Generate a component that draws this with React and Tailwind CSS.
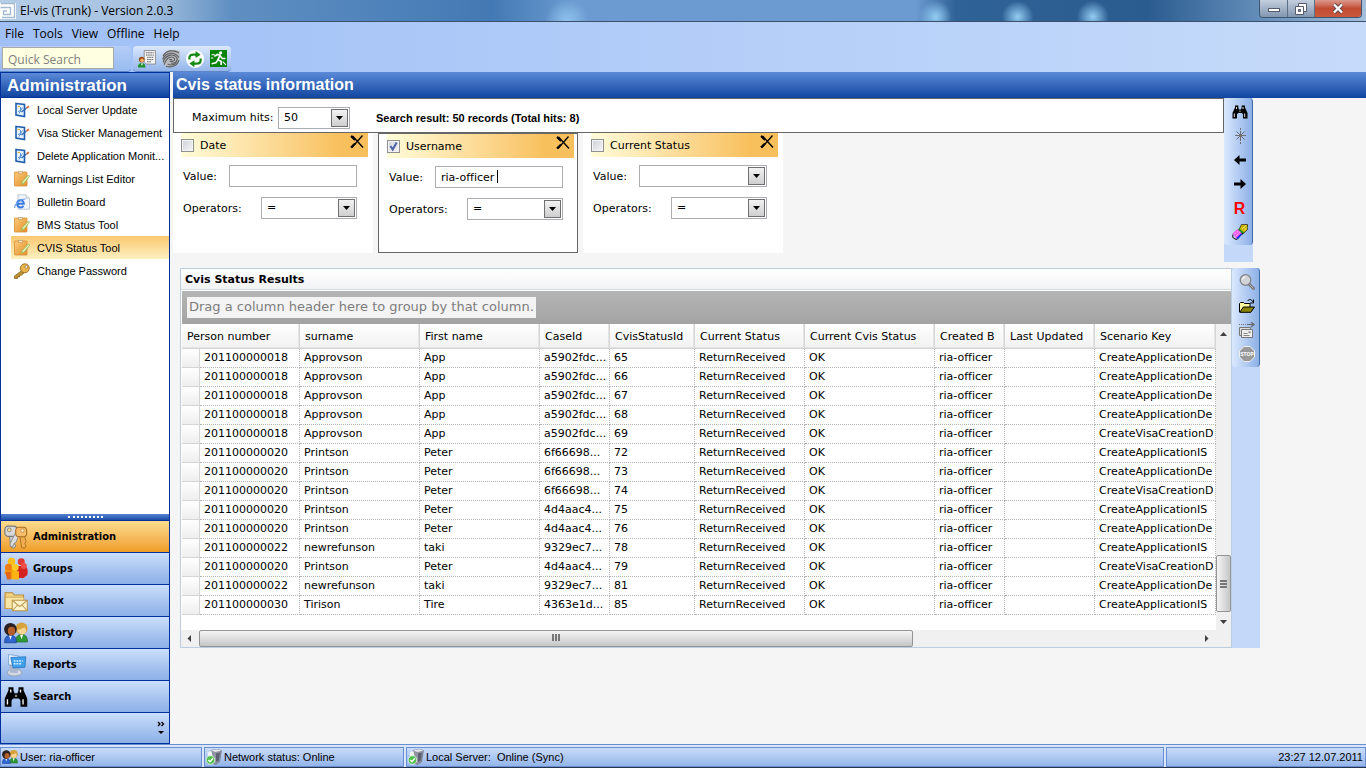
import React from 'react';

const VERDANA = "font-['DejaVu_Sans',Verdana,sans-serif]";
const ARIAL = "font-['Liberation_Sans',Arial,sans-serif]";
const SEGOE = "font-['Open_Sans','Segoe_UI',sans-serif]";

/* ---------- icons ---------- */

function Svg({ size = 16, children, label }) {
  return (
    <svg width={size} height={size} viewBox="0 0 16 16" className="block shrink-0" aria-hidden={!label} aria-label={label}>
      {children}
    </svg>
  );
}

function LogoIcon() {
  return (
    <Svg size={16}>
      <rect width="16" height="16" fill="#fff" />
      <path d="M1 .5h13.500v14H2M.5 4.500h10v7H3.500V8H7" fill="none" stroke="#a3b9d0" strokeWidth="1.300" />
    </Svg>
  );
}

function ReportUserIcon() {
  return (
    <Svg size={18}>
      <path d="M5.500.5h10v12h-8l-2-2z" fill="#f4f4f4" stroke="#8a8a8a" strokeWidth=".8" />
      <path d="M7 2.500h7M7 4.500h7M8 6.500h6M8 8.500h6M8 10.500h4" stroke="#555" strokeWidth=".8" strokeDasharray="1.500 .5" />
      <circle cx="3.300" cy="8.500" r="2.500" fill="#9a4a10" />
      <circle cx="3.600" cy="9.200" r="1.600" fill="#f6b060" />
      <path d="M0 15.500c0-3 1.500-4 3.300-4s3.300 1 3.300 4z" fill="#1f8f2c" />
      <path d="M2.500 12l1 2 1-2z" fill="#fff" />
    </Svg>
  );
}

function FingerprintIcon() {
  return (
    <Svg size={18}>
      <path d="M1 4C4-.5 11-.5 16 .8c-.5 3 .2 6-.5 8.200C14 13 9 16 5 15.500 1 14-.5 8 1 4z" fill="#b9bcc0" />
      <g fill="none" stroke="#5f5f5f" strokeWidth="1">
        <path d="M.8 5.500C4-.5 11 0 15 2.500" />
        <path d="M.6 8.500C3 2 11 1 15 6.500" />
        <path d="M1 11C3 4 10 3 13 6.500c2 3-2 6-5 5" />
        <path d="M2 13C4 6 9 5 11 7.500c1 2-2 3-4 2.500" />
        <path d="M3.500 14.500C8 16 14 14 15 9" />
        <path d="M5 12.500c3 1.500 6 .5 8-1.500" />
        <path d="M6.500 8.500h2.500" />
      </g>
    </Svg>
  );
}

function RefreshIcon() {
  return (
    <Svg size={18}>
      <circle cx="8" cy="8" r="8" fill="#fff" />
      <path d="M3 8.500V7q0-3 3.500-3H9" fill="none" stroke="#148a14" strokeWidth="2" />
      <path d="M8.500.8L13 4.200 8.500 7z" fill="#148a14" />
      <path d="M13 7.500V9q0 3-3.500 3H7" fill="none" stroke="#148a14" strokeWidth="2" />
      <path d="M7.500 9L3 12l4.500 3.300z" fill="#148a14" />
    </Svg>
  );
}

function ExitIcon() {
  return (
    <Svg size={17}>
      <rect width="16" height="16" fill="#0a840a" />
      <circle cx="10" cy="2.700" r="1.500" fill="#fff" />
      <path d="M4 6l3-1.800L9.500 5 7.500 9l3 1.800V14M7.500 9.500L5.500 12 1.500 13M9.500 5.500l2 2.500h3" fill="none" stroke="#fff" strokeWidth="1.500" />
      <path d="M1.500 4.500h3M1 7.500h2M12 11l3 3" stroke="#fff" strokeWidth="1" />
    </Svg>
  );
}

function FormIcon() {
  return (
    <Svg size={16}>
      <path d="M2 1.500l8.500 1v12l-8.500-1.500z" fill="#e9f3ff" stroke="#1f5fae" strokeWidth="1.600" />
      <path d="M4 9.500l3-1M5 11.500l3.500-6M6.500 5v5" fill="none" stroke="#5b93d0" strokeWidth="1" />
      <path d="M3.500 4.500h2.500" stroke="#e0b440" strokeWidth="1.200" />
      <path d="M7.500 10l5-4" stroke="#2c68b8" strokeWidth="1.500" />
      <path d="M12.500 6l2.500-1.700" stroke="#e06a3c" strokeWidth="1.800" />
    </Svg>
  );
}

function ClipboardIcon() {
  return (
    <Svg size={16}>
      <defs>
        <linearGradient id="clip" x1="0" y1="0" x2="1" y2="1">
          <stop offset="0" stopColor="#fbc978" />
          <stop offset="1" stopColor="#e3912a" />
        </linearGradient>
      </defs>
      <rect x=".5" y="1" width="12.500" height="14" rx=".5" fill="url(#clip)" stroke="#d89038" strokeWidth=".8" />
      <path d="M4.500.5h4v1.800h-4z" fill="#f5efe0" stroke="#a98450" strokeWidth=".5" />
      <path d="M7.500 13.500l1-3.300 6-6.200 1.200 1.200-5.500 6.600z" fill="#e8f5c0" stroke="#8ab850" strokeWidth=".8" />
    </Svg>
  );
}

function BulletinIcon() {
  return (
    <Svg size={16}>
      <path d="M4 .8h8l3.500 3.500v10.900H4z" fill="#f2f5fb" stroke="#b3bccb" strokeWidth=".8" />
      <path d="M12 .8v3.500h3.500" fill="#dde4ef" stroke="#b3bccb" strokeWidth=".6" />
      <path d="M3.500 9.800h6.300c0-4.800-6.500-4.600-6.600 0-.1 4.200 4.800 4.600 6.300 1.900" fill="none" stroke="#3b7be0" strokeWidth="2" />
      <path d="M1 14C-.5 11 7 4.500 11.500 5" fill="none" stroke="#5f9bf0" strokeWidth="1.100" />
    </Svg>
  );
}

function KeyIcon() {
  return (
    <Svg size={16}>
      <path d="M8 7.500L.5 13v2.500h3V14h2v-1.700h1.800l3-2.500z" fill="#c08f2e" stroke="#7c5b17" strokeWidth=".7" />
      <circle cx="10.800" cy="5.300" r="4.500" fill="#e9b44c" stroke="#8b6518" strokeWidth=".8" />
      <circle cx="12.300" cy="3.900" r="1.300" fill="#fff" stroke="#7c5b17" strokeWidth=".6" />
    </Svg>
  );
}

function KeysIcon() {
  return (
    <Svg size={24}>
      <path d="M3.500 7l1 7.500 2 1 1.500-1.500-1-1.500 1-1.500-.8-4z" fill="#c9c9c9" stroke="#777" strokeWidth=".5" />
      <rect x=".6" y=".8" width="8" height="6.800" rx="2.200" fill="#d9d9d9" stroke="#7a7a7a" strokeWidth=".8" />
      <circle cx="3.500" cy="3.300" r="1.300" fill="#f8d68a" stroke="#777" strokeWidth=".5" />
      <path d="M10.500 7l1.200 8 2 .5 1-1.700-.9-1.300 1-1.500-1.500-4.500z" fill="#f2ae4e" stroke="#a56d20" strokeWidth=".6" />
      <path d="M7.500 5.500l-3.500 7 .3 2 1.800-.4.600-1.800 1.200-.5 1.600-4z" fill="#dcdcdc" stroke="#7d7d7d" strokeWidth=".5" />
      <rect x="7.800" y="1.500" width="7.300" height="6.300" rx="2.200" fill="#f7bd69" stroke="#a56d20" strokeWidth=".7" />
      <circle cx="12.300" cy="3.700" r="1.100" fill="#fff3d5" stroke="#a56d20" strokeWidth=".4" />
    </Svg>
  );
}

function GroupsIcon() {
  return (
    <Svg size={24}>
      <circle cx="11.500" cy="3.200" r="2.300" fill="#e03a34" />
      <path d="M8.500 6h5.500c2 1 2 4 1.500 6l-2.500 2H9z" fill="#d5211f" />
      <circle cx="13.200" cy="6" r="2" fill="#ee5048" />
      <circle cx="5" cy="3" r="2.500" fill="#fbbd17" />
      <path d="M1 6h7.500v8.500H3L.5 11z" fill="#f59a0c" />
      <circle cx="3" cy="6.800" r="2.300" fill="#ee7d12" />
      <circle cx="7.500" cy="7" r="2.300" fill="#ffc928" />
      <path d="M5.500 9.500h4.500v5.500H5.500z" fill="#fbb414" />
      <path d="M1 10h3.500v5H2z" fill="#e2641a" />
    </Svg>
  );
}

function InboxIcon() {
  return (
    <Svg size={24}>
      <path d="M.7 2.500h5l1 1.500h6.300v9H.7z" fill="#f2d384" stroke="#b78d37" strokeWidth=".7" />
      <path d="M.9 5.500h12.300V13H.9z" fill="#fae6a4" stroke="#c59c48" strokeWidth=".5" />
      <path d="M5.500 7.500h10v7h-10z" fill="#fff4cb" stroke="#b9954a" strokeWidth=".7" />
      <path d="M5.500 7.500l5 4.200 5-4.200M5.500 14.500l3.700-4M15.500 14.500l-3.700-4" fill="none" stroke="#b9954a" strokeWidth=".7" />
    </Svg>
  );
}

function UsersIcon({ size = 24 }) {
  return (
    <Svg size={size}>
      <path d="M8 14c0-4 1.500-5 3.700-5s3.900 1 3.900 5z" fill="#2f9a35" stroke="#1d6a22" strokeWidth=".5" />
      <path d="M10.700 9.200l1 3 1-3z" fill="#fff" />
      <circle cx="11.700" cy="5" r="4" fill="#d8a23a" />
      <path d="M8.800 5.500c2 .5 3.500-.5 4.700-1.500l1.300 2c0 4-5.600 4-6-.5z" fill="#f7d494" />
      <path d="M.4 14.500c0-4 1.500-5 3.900-5s3.900 1 3.900 5z" fill="#2f66d0" stroke="#1b3f90" strokeWidth=".5" />
      <path d="M3.300 9.500l1 3 1-3z" fill="#fff" />
      <circle cx="4.300" cy="5.500" r="4.200" fill="#2a2020" />
      <ellipse cx="5" cy="6.700" rx="2.500" ry="2.800" fill="#b5602a" />
    </Svg>
  );
}

function ReportsIcon() {
  return (
    <Svg size={24}>
      <ellipse cx="7" cy="13" rx="4.800" ry="2.300" fill="#d5d9e4" stroke="#8e95a8" strokeWidth=".5" />
      <path d="M3 3.500l1 9.500 5 .5.500-4z" fill="#aab6cf" />
      <path d="M3 1l7 1v6H3z" fill="#e8f2fc" stroke="#6e9cd0" strokeWidth=".5" />
      <path d="M4.500 3l10-.5-.5 7-8 .5z" fill="#3fa0ec" stroke="#2472b8" strokeWidth=".5" />
      <path d="M6.500 5.300h6M6.500 7.200h5.500" stroke="#d9efff" strokeWidth="1" strokeDasharray="1.200 .6" />
    </Svg>
  );
}

function BinocularsIcon({ size = 16 }) {
  return (
    <Svg size={size}>
      <path d="M3 1.500h3.300v2l.7 2h2l.7-2v-2H13v2l2.500 5.500v5.500H11v-4l-1-1.500H6l-1 1.500v4H.5V9L3 3.500z" fill="#000" />
      <path d="M4.500 3v2M2.300 9.500V13M11 3v2M12.700 9.500V13" stroke="#fff" strokeWidth=".9" />
      <path d="M7.300 6.500h1.400v1.500H7.300z" fill="#8a8a8a" />
    </Svg>
  );
}

function SparkIcon() {
  return (
    <Svg>
      <g stroke="#707070" strokeWidth="1">
        <path d="M8.500 0v2M8.500 3v10M8.500 14v2M3 7.500h11" />
        <path d="M4.500 3.500l8 8M12.500 3.500l-8 8" />
      </g>
    </Svg>
  );
}

function ArrowIcon({ right }) {
  return (
    <Svg>
      <path d={right ? 'M8.500 3L14 8l-5.500 5V9.500H2v-3h6.500z' : 'M7.500 3L2 8l5.500 5V9.500H14v-3H7.500z'} fill="#000" />
    </Svg>
  );
}

function EraserIcon() {
  return (
    <Svg>
      <path d="M9.500.5h6v5l-5 5-4-4z" fill="#c7b400" stroke="#222" strokeWidth=".7" />
      <path d="M10 5l4-3.500M12 6.500l3-3" stroke="#fff27a" strokeWidth=".8" />
      <path d="M7 4.500l5 4-1.500 2-5-4z" fill="#118c22" />
      <path d="M.5 9.500L5.500 5l4.500 4.500-5.500 5.500z" fill="#f05ae8" />
      <path d="M2 10.500l4.500-4M4 12l4.500-4.500" stroke="#fff" strokeWidth=".7" strokeDasharray="1 1" />
      <path d="M.8 10.500v3L4 15.500l1.500-.5 5.300-6" fill="none" stroke="#111" strokeWidth="1" />
      <path d="M5 14.500l4.500-4.500" stroke="#0a2cff" strokeWidth="1.600" />
    </Svg>
  );
}

function MagnifierIcon() {
  return (
    <Svg>
      <path d="M10 10l4.500 4.500" stroke="#777" strokeWidth="3" strokeLinecap="round" />
      <path d="M10.500 10.500l4 4" stroke="#b9b9b9" strokeWidth="1" />
      <circle cx="6.500" cy="6" r="5.300" fill="#d0d4d8" stroke="#828282" strokeWidth="1.200" />
      <path d="M3.500 5.500a3 3 0 0 1 3-2.500" fill="none" stroke="#fff" strokeWidth="1" />
    </Svg>
  );
}

function OpenFolderIcon() {
  return (
    <Svg>
      <path d="M.5 14V5.500l1-1h3l1 1h5.500V9" fill="#fff9a0" stroke="#000" strokeWidth="1" />
      <path d="M.8 14.300L4.300 9h11.200l-3.700 5.300z" fill="#8a8400" stroke="#000" strokeWidth="1" />
      <path d="M8.500 3c1.500-2 4-2 5.300.8M14.500 1.500V5h-3.300" fill="none" stroke="#000" strokeWidth="1" />
    </Svg>
  );
}

function SendFormsIcon() {
  return (
    <Svg>
      <path d="M0 2.500h8" stroke="#777" strokeWidth="1" strokeDasharray="1 1" />
      <path d="M8 2.500h7M12 0l3 2.500-3 2.500" fill="none" stroke="#666" strokeWidth="1.200" />
      <path d="M.5 5.500h11v8H.5z" fill="#ddd" stroke="#777" />
      <path d="M2.500 7.500h11v8h-11z" fill="#eee" stroke="#777" />
      <path d="M4.500 11.500h4M4.500 13.500h6" stroke="#888" />
      <path d="M9.500 9.500h2v1.500h-2z" fill="#777" />
    </Svg>
  );
}

function StopIcon() {
  return (
    <Svg>
      <path d="M5 .5h6L15.500 5v6L11 15.500H5L.5 11V5z" fill="#999" stroke="#eee" strokeWidth="1" />
      <text x="8" y="10" textAnchor="middle" fontSize="5" fontWeight="bold" fill="#fff" fontFamily="Liberation Sans">STOP</text>
    </Svg>
  );
}

function ServerIcon() {
  return (
    <Svg size={16}>
      <path d="M5 1.500L11.500.3l4 1.200-2 11.500-4 2.500-4-2z" fill="#8f93a2" stroke="#6a6c78" strokeWidth=".6" />
      <path d="M5 1.500L11.500.3l4 1.200-6 1.500z" fill="#e5e7ee" />
      <path d="M10 4.500l4-1-1.200 8-2.800 1.500z" fill="#5c6072" />
      <path d="M1.500 3.500l4-1.500 1.500 8-4 1z" fill="#f0f2f7" />
      <circle cx="4.500" cy="11" r="4.300" fill="#4fc04a" stroke="#e9f7e6" strokeWidth=".8" />
      <path d="M2.300 11l1.700 1.800L7 9.300" fill="none" stroke="#fff" strokeWidth="1.400" />
    </Svg>
  );
}

function CloseX() {
  return (
    <svg width="14" height="14" viewBox="0 0 14 14" className="block" aria-hidden="true">
      <path d="M1 1.500h2L13 12.500M12.500.5L2 12.500" fill="none" stroke="#000" strokeWidth="1.300" />
      <path d="M1 12.500l4-4M1 1l4 4" stroke="#000" strokeWidth="2" />
    </svg>
  );
}

/* ---------- data ---------- */

const TOOLS = [
  { label: 'Local Server Update', Icon: FormIcon },
  { label: 'Visa Sticker Management', Icon: FormIcon },
  { label: 'Delete Application Monit...', Icon: FormIcon },
  { label: 'Warnings List Editor', Icon: ClipboardIcon },
  { label: 'Bulletin Board', Icon: BulletinIcon },
  { label: 'BMS Status Tool', Icon: ClipboardIcon },
  { label: 'CVIS Status Tool', Icon: ClipboardIcon, active: true },
  { label: 'Change Password', Icon: KeyIcon },
];

const SECTIONS = [
  { label: 'Administration', Icon: KeysIcon, active: true },
  { label: 'Groups', Icon: GroupsIcon },
  { label: 'Inbox', Icon: InboxIcon },
  { label: 'History', Icon: UsersIcon },
  { label: 'Reports', Icon: ReportsIcon },
  { label: 'Search', Icon: BinocularsIcon },
];

const HEADERS = ['surname', 'First name', 'CaseId', 'CvisStatusId', 'Current Status', 'Current Cvis Status', 'Created B', 'Last Updated', 'Scenario Key'];

const ROWS = [
  ['201100000018', 'Approvson', 'App', 'a5902fdc', '65', 'CreateApplicationDe'],
  ['201100000018', 'Approvson', 'App', 'a5902fdc', '66', 'CreateApplicationDe'],
  ['201100000018', 'Approvson', 'App', 'a5902fdc', '67', 'CreateApplicationDe'],
  ['201100000018', 'Approvson', 'App', 'a5902fdc', '68', 'CreateApplicationDe'],
  ['201100000018', 'Approvson', 'App', 'a5902fdc', '69', 'CreateVisaCreationD'],
  ['201100000020', 'Printson', 'Peter', '6f66698', '72', 'CreateApplicationIS'],
  ['201100000020', 'Printson', 'Peter', '6f66698', '73', 'CreateApplicationDe'],
  ['201100000020', 'Printson', 'Peter', '6f66698', '74', 'CreateVisaCreationD'],
  ['201100000020', 'Printson', 'Peter', '4d4aac4', '75', 'CreateApplicationIS'],
  ['201100000020', 'Printson', 'Peter', '4d4aac4', '76', 'CreateApplicationDe'],
  ['201100000022', 'newrefunson', 'taki', '9329ec7', '78', 'CreateApplicationIS'],
  ['201100000020', 'Printson', 'Peter', '4d4aac4', '79', 'CreateVisaCreationD'],
  ['201100000022', 'newrefunson', 'taki', '9329ec7', '81', 'CreateApplicationDe'],
  ['201100000030', 'Tirison', 'Tire', '4363e1d', '85', 'CreateApplicationIS'],
].map(([person, surname, first, caseId, id, key]) => [
  person, surname, first, `${caseId}...`, id, 'ReturnReceived', 'OK', 'ria-officer', '', key,
]);

/* ---------- window chrome ---------- */

function TitleBar() {
  return (
    <header className="flex h-[22px] items-start justify-between border-b border-[#3c4f6b] bg-[radial-gradient(circle_at_41.5%_100%,#8fc3ee_0,transparent_22px),radial-gradient(circle_at_68.5%_80%,#93cdf3_0,transparent_16px),radial-gradient(circle_at_74.5%_80%,#93cdf3_0,transparent_16px),radial-gradient(circle_at_80%_80%,#93cdf3_0,transparent_16px),linear-gradient(90deg,#b4cce6_0%,#a5c1df_11%,#5f8fc2_17%,#4379b4_36%,#6b9bd0_42%,#6b9bd0_67%,#2f6296_70%,#2b5c90_84%,#5a86b3_91%,#a3bfdb_100%)]">
      <div className="flex h-[22px] items-center gap-1">
        <LogoIcon />
        <h1 className={`${SEGOE} text-[12px] leading-4 text-black`}>El-vis (Trunk) - Version 2.0.3</h1>
      </div>
      <div className="mr-1 flex h-[18px] overflow-hidden rounded-b-[4px] border border-t-0 border-[#3f5673]">
        <button aria-label="Minimize" className="flex w-[28px] items-end justify-center border-r border-[#5c708a] bg-gradient-to-b from-[#c3cfdd] to-[#8296b0] pb-[5px]">
          <span className="h-[4px] w-[12px] border border-[#555a6c] bg-white" />
        </button>
        <button aria-label="Restore" className="flex w-[27px] items-center justify-center border-r border-[#5c708a] bg-gradient-to-b from-[#c3cfdd] to-[#8296b0]">
          <svg width="12" height="12" viewBox="0 0 12 12" aria-hidden="true">
            <path d="M3.500.5h8v8h-8z" fill="#fff" stroke="#555a6c" />
            <path d="M.5 3.500h8v8h-8z" fill="#fff" stroke="#555a6c" />
            <path d="M3.500 6.500h2v2h-2z" fill="#8296b0" stroke="#555a6c" />
          </svg>
        </button>
        <button aria-label="Close" className="flex w-[46px] items-center justify-center bg-gradient-to-b from-[#d99a8d] via-[#c24a32] to-[#c75a3c]">
          <svg width="12" height="11" viewBox="0 0 12 11" aria-hidden="true">
            <path d="M2 1.500l8 8M10 1.500l-8 8" stroke="#5a4450" strokeWidth="4" />
            <path d="M2 1.500l8 8M10 1.500l-8 8" stroke="#fff" strokeWidth="2.400" />
          </svg>
        </button>
      </div>
    </header>
  );
}

function MenuBar() {
  return (
    <nav className={`${SEGOE} flex h-6 items-center gap-[9px] pl-[5px] text-[12px] leading-4 text-black`}>
      {['File', 'Tools', 'View', 'Offline', 'Help'].map((item) => (
        <button key={item}>{item}</button>
      ))}
    </nav>
  );
}

function ToolBar() {
  return (
    <div className="flex h-[26px] gap-[2px]">
      <div className="w-[131px] rounded-r border-b border-[#5f86c4] bg-gradient-to-b from-[#b5cdf7] to-[#98bbf0] pl-[2px] pt-px">
        <input
          aria-label="Quick Search"
          placeholder="Quick Search"
          className={`${SEGOE} block h-[22px] w-[112px] border border-[#a9a9a9] bg-[#ffffe1] px-[5px] pt-[3px] text-[12px] leading-4 outline-none placeholder:text-[#808080]`}
        />
      </div>
      <div className="flex w-[98px] items-center gap-[6px] rounded border-b border-[#5f86c4] bg-gradient-to-b from-[#dbe8fc] to-[#94b6ea] pl-[5px]">
        <button aria-label="Applicant report"><ReportUserIcon /></button>
        <button aria-label="Fingerprints"><FingerprintIcon /></button>
        <button aria-label="Refresh"><RefreshIcon /></button>
        <button aria-label="Exit"><ExitIcon /></button>
      </div>
    </div>
  );
}

/* ---------- side bar ---------- */

function SideBar() {
  return (
    <aside className="flex w-[170px] shrink-0 flex-col border border-[#00309c] bg-white">
      <h2 className={`${ARIAL} h-[25px] border-b border-[#00309c] bg-gradient-to-b from-[#5b8ad8] to-[#0f459f] pl-[6px] text-[17px] font-bold leading-[25px] text-white`}>
        Administration
      </h2>
      <ul className={`${ARIAL} flex-1 pl-[10px] text-[11px] text-black`}>
        {TOOLS.map(({ label, Icon, active }) => (
          <li key={label}>
            <a
              href="#"
              className={`flex h-[23px] items-center gap-[7px] whitespace-nowrap pl-[3px] ${active ? 'bg-gradient-to-b from-[#fac86e] to-[#fdf0c0]' : ''}`}
            >
              <Icon />
              {label}
            </a>
          </li>
        ))}
      </ul>
      <div className="flex h-[6px] items-center justify-center bg-gradient-to-b from-[#5684d2] to-[#1c4da5]">
        <span className="w-[35px] border-t-2 border-dotted border-white" />
      </div>
      <ul className="font-['DejaVu_Sans_Condensed',Tahoma,sans-serif] text-[11px] font-bold text-black">
        {SECTIONS.map(({ label, Icon, active }) => (
          <li key={label}>
            <button
              className={`flex h-8 w-full items-center gap-[5px] border-t border-[#00309c] bg-gradient-to-b pl-[3px] ${active ? 'from-[#fbdc8c] to-[#ef9d22]' : 'from-[#cbdefb] to-[#8cafe6]'}`}
            >
              <Icon size={24} />
              {label}
            </button>
          </li>
        ))}
      </ul>
      <button aria-label="Configure buttons" className="flex h-[31px] items-center justify-end border-t border-[#00309c] bg-gradient-to-b from-[#cbdefb] to-[#8cafe6] pr-1">
        <svg width="8" height="14" viewBox="0 0 8 14" aria-hidden="true">
          <path d="M1 1l2 2-2 2M4.500 1l2 2-2 2" fill="none" stroke="#000" strokeWidth="1.300" />
          <path d="M1 10h6l-3 3z" />
        </svg>
      </button>
    </aside>
  );
}

/* ---------- search form ---------- */

function DropDown({ id, className, options }) {
  return (
    <span className={`relative block h-[22px] ${className}`}>
      <select id={id} className="block h-full w-full appearance-none border border-[#abadb3] bg-white pl-[5px] pr-5 text-[11px] text-black outline-none">
        {options.map((o) => (
          <option key={o}>{o}</option>
        ))}
      </select>
      <span className="pointer-events-none absolute right-[2px] top-[2px] flex h-[18px] w-[17px] items-center justify-center border border-[#707070] bg-gradient-to-b from-[#f2f2f2] to-[#cfcfcf]">
        <svg width="7" height="4" viewBox="0 0 7 4" aria-hidden="true"><path d="M0 0h7L3.500 4z" /></svg>
      </span>
    </span>
  );
}

function Criterion({ name, id, value, checked, focused, dropDown }) {
  return (
    <fieldset className={`h-[120px] w-[200px] shrink-0 bg-white pl-2 ${focused ? 'border border-[#666] pr-[3px]' : 'pr-[5px]'}`}>
      <div className="flex h-6 items-center bg-gradient-to-r from-[#fffcd9] to-[#f8c05c] to-85%">
        <label className="flex flex-1 items-center gap-[6px]">
          <span className="relative block size-[13px]">
            <input type="checkbox" defaultChecked={checked} className="peer block size-[13px] appearance-none border border-[#8e8f8f] bg-gradient-to-br from-[#cdd1d8] to-[#f6f6f6] shadow-[inset_0_0_0_1px_#f4f4f4]" />
            <svg width="13" height="13" viewBox="0 0 13 13" className="pointer-events-none absolute left-0 top-0 hidden peer-checked:block" aria-hidden="true">
              <path d="M3.500 6l2.200 3.500 4-7" fill="none" stroke="#4b62a3" strokeWidth="2" />
            </svg>
          </span>
          <span className="pt-px">{name}</span>
        </label>
        <button aria-label={`Remove ${name}`} className="mb-[6px] mr-1"><CloseX /></button>
      </div>
      <div className="ml-[2px] mr-[11px] mt-2 flex flex-col gap-[10px]">
        <div className="flex items-center justify-between">
          <label htmlFor={`${id}-value`} className="pt-px">Value:</label>
          {dropDown ? (
            <DropDown id={`${id}-value`} className="w-32" options={['']} />
          ) : (
            <span className="relative block">
              <input id={`${id}-value`} defaultValue={value} className="block h-[22px] w-32 border border-[#abadb3] bg-white px-[5px] text-[11px] text-black outline-none" />
              {focused && <span className="absolute left-[62px] top-1 h-[13px] w-px bg-black" />}
            </span>
          )}
        </div>
        <div className="flex items-center justify-between">
          <label htmlFor={`${id}-op`} className="pt-px">Operators:</label>
          <DropDown id={`${id}-op`} className="w-24" options={['=']} />
        </div>
      </div>
    </fieldset>
  );
}

function SearchArea() {
  return (
    <section className="flex pr-[113px]">
      <div className="min-w-0 flex-1">
        <div className="flex h-[35px] items-center border border-[#666] bg-white pl-[18px] pt-1">
          <label htmlFor="max-hits" className="w-[86px] pt-px">Maximum hits:</label>
          <DropDown id="max-hits" className="w-[72px]" options={['50']} />
          <strong className={`${ARIAL} ml-[26px] text-[11px] font-bold`}>Search result: 50 records (Total hits: 8)</strong>
        </div>
        <div className="flex gap-[5px]">
          <Criterion name="Date" id="date" />
          <Criterion name="Username" id="username" value="ria-officer" checked focused />
          <Criterion name="Current Status" id="status" dropDown />
        </div>
      </div>
      <div className="w-[29px] shrink-0 self-start bg-[#c4d9f9] pb-[17px]">
        <div className="flex h-[147px] flex-col items-center gap-2 rounded border-r border-[#3f67a8] bg-gradient-to-r from-[#dbe9fd] to-[#8db0e6] pl-[3px] pt-[6px]">
          <button aria-label="Find"><BinocularsIcon /></button>
          <button aria-label="New"><SparkIcon /></button>
          <button aria-label="Back"><ArrowIcon /></button>
          <button aria-label="Forward"><ArrowIcon right /></button>
          <button className={`${ARIAL} h-4 text-[16px] font-bold leading-[18px] text-[#ff0000]`}>R</button>
          <button aria-label="Clear"><EraserIcon /></button>
        </div>
      </div>
    </section>
  );
}

/* ---------- results ---------- */

const headCell = 'h-[25px] overflow-hidden whitespace-nowrap border-b border-r border-[#d5d5d5] bg-gradient-to-b from-white to-[#f1f1f1] p-0 pl-[5px] pt-px text-left font-normal shadow-[inset_-1px_-1px_0_#e4e4e4]';

function ResultsTable() {
  return (
    <table className="w-full table-fixed border-separate border-spacing-0 bg-white text-[11px] text-black">
      <colgroup>
        <col className="w-[18px]" />
        <col className="w-[100px]" />
        <col className="w-[120px]" />
        <col className="w-[120px]" />
        <col className="w-[70px]" />
        <col className="w-[85px]" />
        <col className="w-[110px]" />
        <col className="w-[130px]" />
        <col className="w-[70px]" />
        <col className="w-[90px]" />
        <col />
      </colgroup>
      <thead>
        <tr>
          <th colSpan={2} className={headCell}>Person number</th>
          {HEADERS.map((h) => (
            <th key={h} className={headCell}>{h}</th>
          ))}
        </tr>
      </thead>
      <tbody>
        {ROWS.map((row, i) => (
          <tr key={i}>
            <td className="h-[19px] border-b border-r border-[#d5d5d5] bg-gradient-to-b from-white to-[#eee] p-0" />
            {row.map((cell, j) => (
              <td key={j} className="h-[19px] overflow-hidden whitespace-nowrap border-b border-r border-dotted border-[#b4b4b4] p-0 pl-1 leading-4">
                {cell}
              </td>
            ))}
          </tr>
        ))}
      </tbody>
    </table>
  );
}

function Results() {
  return (
    <section className="ml-[7px] mt-[6px] flex pr-[106px]">
      <div className="flex min-w-0 flex-1 flex-col border border-[#bccddd] bg-white">
        <h3 className="h-[21px] border-b border-[#d5d8dc] bg-gradient-to-b from-white to-[#f2f3f5] pl-1 text-[11px] font-bold leading-[21px]">Cvis Status Results</h3>
        <div className="ml-px mt-px flex h-[33px] items-center bg-gradient-to-b from-[#b5b5b5] to-[#a3a3a3] pl-[5px]">
          <p className="h-[21px] bg-[#f3f3f3] px-[2px] text-[13px] leading-[20px] text-[#7d7d7d]">Drag a column header here to group by that column.</p>
        </div>
        <div className="flex h-[306px] pl-px">
          <div className="min-w-0 flex-1 overflow-hidden">
            <ResultsTable />
          </div>
          <div className="flex w-[15px] flex-col items-center bg-[#f0f0f0]">
            <svg width="7" height="19" viewBox="0 0 7 19" aria-hidden="true"><path d="M0 12h7L3.500 8z" fill="#404040" /></svg>
            <div className="flex-1" />
            <div className="flex h-[57px] w-[15px] flex-col items-center justify-center gap-px rounded-[2px] border border-[#959595] bg-gradient-to-r from-[#f5f5f5] to-[#c6c6c6]">
              <span className="h-[2px] w-[7px] bg-[#777]" />
              <span className="h-[2px] w-[7px] bg-[#777]" />
              <span className="h-[2px] w-[7px] bg-[#777]" />
            </div>
            <svg width="7" height="18" viewBox="0 0 7 18" aria-hidden="true"><path d="M0 8h7l-3.500 4z" fill="#404040" /></svg>
          </div>
        </div>
        <div className="flex h-[17px] bg-[#f0f0f0]">
          <svg width="18" height="17" viewBox="0 0 18 17" className="shrink-0" aria-hidden="true"><path d="M10 5v7L6.500 8.500z" fill="#404040" /></svg>
          <div className="flex w-[68%] items-center justify-center gap-px rounded-[2px] border border-[#959595] bg-gradient-to-b from-[#f5f5f5] to-[#c6c6c6] pb-[2px]">
            <span className="h-[7px] w-[2px] bg-[#777]" />
            <span className="h-[7px] w-[2px] bg-[#777]" />
            <span className="h-[7px] w-[2px] bg-[#777]" />
          </div>
          <div className="flex-1" />
          <svg width="32" height="17" viewBox="0 0 32 17" className="shrink-0" aria-hidden="true"><path d="M6 5v7l3.500-3.500z" fill="#404040" /></svg>
        </div>
      </div>
      <div className="w-[28px] shrink-0 bg-[#c4d9f9]">
        <div className="flex h-[99px] flex-col items-center gap-2 rounded border-r border-[#3f67a8] bg-gradient-to-r from-[#dbe9fd] to-[#8db0e6] pl-[2px] pt-[6px]">
          <button aria-label="View"><MagnifierIcon /></button>
          <button aria-label="Open"><OpenFolderIcon /></button>
          <button aria-label="Send"><SendFormsIcon /></button>
          <button aria-label="Stop"><StopIcon /></button>
        </div>
      </div>
    </section>
  );
}

/* ---------- status bar ---------- */

function StatusPane({ className, children }) {
  return (
    <div className={`flex h-5 items-center gap-[2px] overflow-hidden whitespace-nowrap border border-[#6b8fd0] bg-gradient-to-b from-[#cadcfa] to-[#94b5ea] pl-px ${className}`}>
      {children}
    </div>
  );
}

function StatusBar() {
  return (
    <footer className={`${ARIAL} flex h-6 gap-[2px] border-b border-t border-b-[#22344e] border-t-[#6b8fd0] bg-[#d8e6fb] pt-[2px] text-[11px] text-black`}>
      <StatusPane className="w-[202px]"><UsersIcon size={16} />User: ria-officer</StatusPane>
      <StatusPane className="w-[200px]"><ServerIcon />Network status: Online</StatusPane>
      <StatusPane className="flex-1"><ServerIcon />Local Server:&nbsp; Online (Sync)</StatusPane>
      <StatusPane className="w-[200px] justify-end pr-[2px]">23:27 12.07.2011</StatusPane>
    </footer>
  );
}

export default function App() {
  return (
    <div className={`${VERDANA} flex min-h-screen flex-col bg-[#f5f5f5] text-[11px] leading-4 text-black [font-variant-ligatures:none]`}>
      <TitleBar />
      <div className="bg-gradient-to-r from-[#9fbff6] to-[#c6dbfa]">
        <MenuBar />
        <ToolBar />
      </div>
      <div className="flex flex-1 gap-[3px]">
        <SideBar />
        <main className="min-w-0 flex-1">
          <h2 className={`${ARIAL} h-[26px] bg-gradient-to-b from-[#5b8ad8] to-[#0f459f] pl-[3px] text-[16px] font-bold leading-[25px] text-white`}>
            Cvis status information
          </h2>
          <SearchArea />
          <Results />
        </main>
      </div>
      <StatusBar />
    </div>
  );
}
